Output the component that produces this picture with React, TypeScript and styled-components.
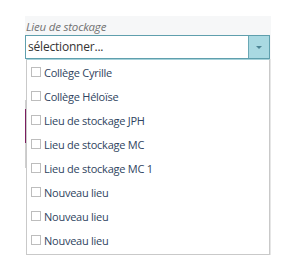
import React from 'react';
import styled, { createGlobalStyle } from 'styled-components';

const GlobalStyle = createGlobalStyle`
  body {
    margin: 0;
    background: #ffffff;
    font-family: 'Open Sans', 'Noto Sans', 'Liberation Sans', sans-serif;
  }
`;

const Page = styled.div`
  height: 259px;
  box-sizing: border-box;
  padding: 16px 0 0 25px;
`;

const Field = styled.div`
  position: relative;
  width: 246px;
  height: 240px;
`;

const Header = styled.div`
  background: #f6f7f8;
  padding-top: 3px;
`;

const Label = styled.div`
  font-size: 11.5px;
  line-height: 16px;
  font-style: italic;
  color: #727272;
  padding-left: 1px;
  letter-spacing: -0.2px;
`;

const Combo = styled.div`
  display: flex;
  height: 24px;
  box-sizing: border-box;
  width: 245px;
  border: 1px solid #5f9fad;
  background: #ffffff;
`;

const Value = styled.div`
  flex: 1;
  font-size: 12px;
  line-height: 22px;
  color: #333333;
  padding-left: 2px;
  letter-spacing: -0.2px;
`;

const Toggle = styled.div`
  width: 20px;
  display: flex;
  align-items: center;
  justify-content: center;
  background: #a9d9e2;
  border-left: 1px solid #6aa8b5;
`;

const Caret = styled.div`
  width: 0;
  height: 0;
  border-left: 3px solid transparent;
  border-right: 3px solid transparent;
  border-top: 3px solid #4c8494;
`;

const Behind = styled.div`
  margin-top: 41px;
  height: 68px;
  padding-top: 9px;
  box-sizing: border-box;
  border-left: 1px solid #cfcfcf;
`;

const Accent = styled.div`
  height: 34px;
  margin-left: -1px;
  border-left: 1px solid #7b1e5e;
`;

const Menu = styled.ul`
  position: absolute;
  top: 43px;
  left: 1px;
  width: 244px;
  box-sizing: border-box;
  margin: 0;
  padding: 0 0 2px;
  list-style: none;
  background: #ffffff;
  border: 1px solid #c9c9c9;
  border-top: 1px solid #a6d2da;
  box-shadow: 1px 0 0 #e6e6e6;
`;

const Option = styled.li`
  display: flex;
  align-items: center;
  height: 24px;
  padding-left: 4px;
`;

const Box = styled.span`
  width: 8px;
  height: 8px;
  border: 1px solid #bdbdbd;
  background: #ffffff;
  margin-right: 3px;
`;

const OptionText = styled.span`
  font-size: 11px;
  color: #2f4460;
  letter-spacing: -0.25px;
`;

const options = [
  'Collège Cyrille',
  'Collège Héloïse',
  'Lieu de stockage JPH',
  'Lieu de stockage MC',
  'Lieu de stockage MC 1',
  'Nouveau lieu',
  'Nouveau lieu',
  'Nouveau lieu',
];

const App = () => {
  return (
    <Page>
      <GlobalStyle />
      <Field>
        <Header>
          <Label>Lieu de stockage</Label>
          <Combo>
            <Value>sélectionner...</Value>
            <Toggle>
              <Caret />
            </Toggle>
          </Combo>
        </Header>
        <Behind>
          <Accent />
        </Behind>
        <Menu>
          {options.map((name, i) => (
            <Option key={i}>
              <Box />
              <OptionText>{name}</OptionText>
            </Option>
          ))}
        </Menu>
      </Field>
    </Page>
  );
};

export default App;
